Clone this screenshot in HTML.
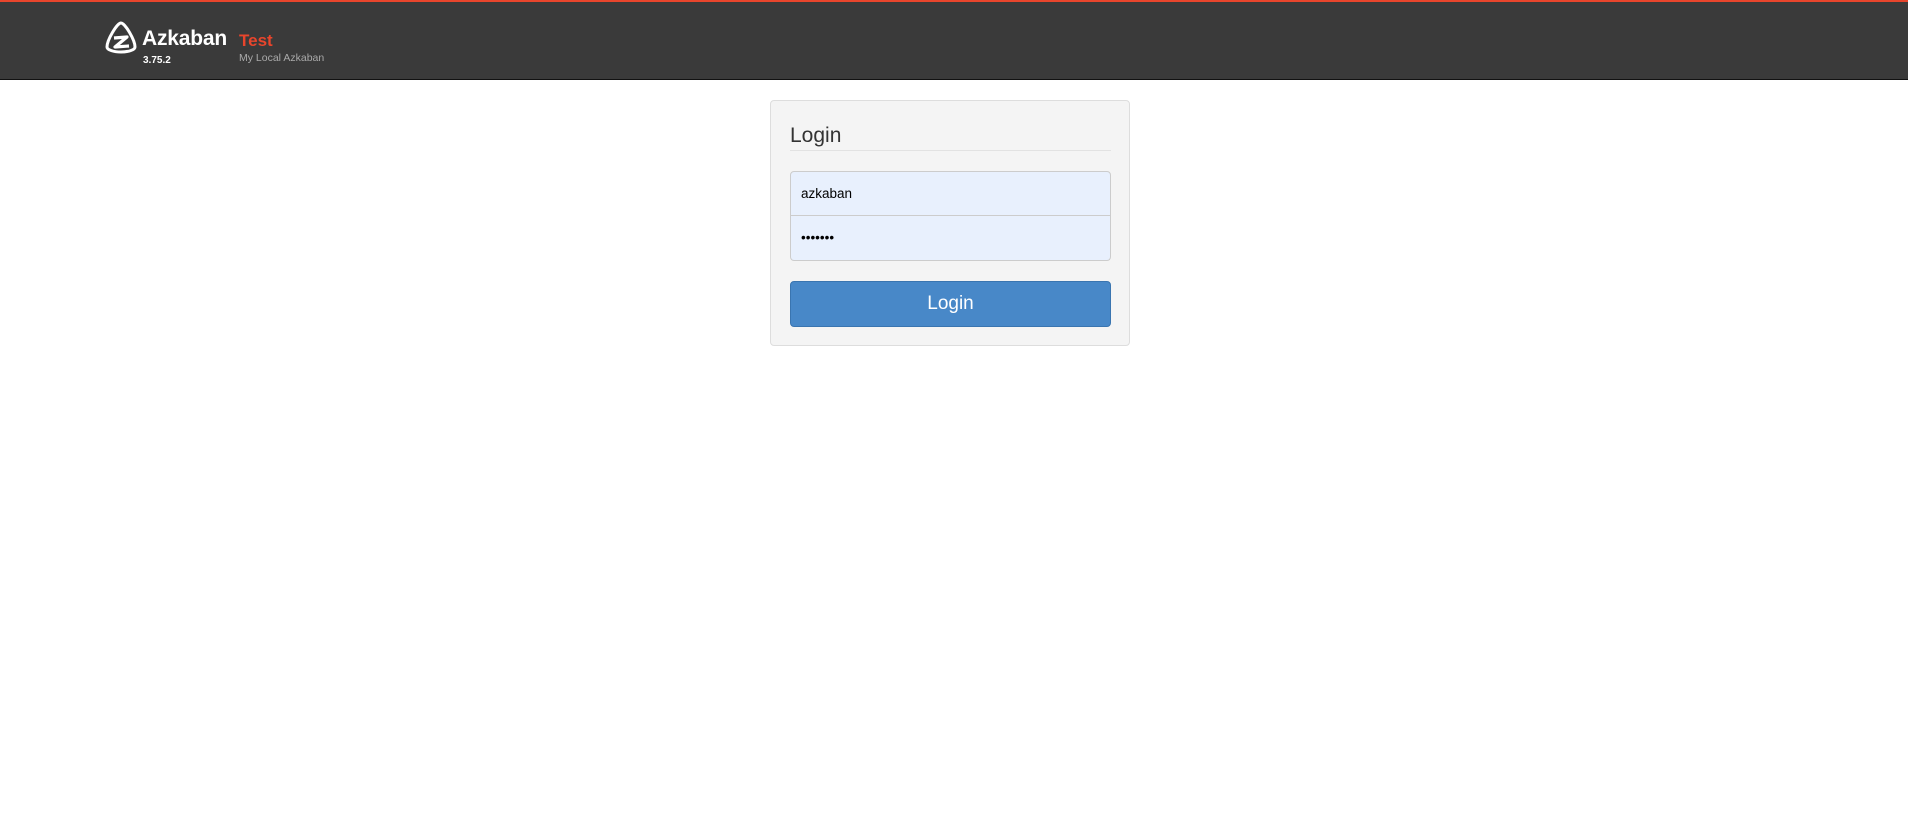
<!DOCTYPE html>
<html><head><meta charset="utf-8"><style>
*{box-sizing:border-box;margin:0;padding:0}
body{width:1908px;height:832px;background:#fff;font-family:"Liberation Sans",Arial,sans-serif;position:relative;overflow:hidden}
.hdr{position:absolute;left:0;top:0;width:1908px;height:80px;background:#3a3a3a;border-top:2px solid #e8452c;border-bottom:1px solid #111}
.logo{position:absolute;left:104px;top:18px}
.az{position:absolute;left:142px;top:25px;color:#fff;font-weight:bold;font-size:21px;letter-spacing:-0.2px}
.test{position:absolute;left:239px;top:29px;color:#e8452c;font-weight:bold;font-size:17px}
.ver{position:absolute;left:143px;top:53px;color:#fff;font-weight:bold;font-size:10px}
.sub{position:absolute;left:239px;top:50px;color:#aaa;font-size:10.5px}
.panel{position:absolute;left:770px;top:100px;width:360px;height:246px;background:#f4f4f4;border:1px solid #ddd;border-radius:4px}
.title{position:absolute;left:19px;top:23px;font-size:21px;color:#333}
.hr{position:absolute;left:19px;top:49px;width:321px;height:1px;background:#e2e2e2}
.inp{position:absolute;left:19px;width:321px;height:45px;background:#e8f0fd;border:1px solid #ccc;font-size:13.5px;color:#000;padding-left:10px;line-height:43px}
.i1{top:70px;border-radius:4px 4px 0 0}
.i2{top:115px;border-radius:0 0 4px 4px;border-top:none}
.btn{position:absolute;left:19px;top:180px;width:321px;height:46px;background:#4888c8;border:1px solid #3a75b0;border-radius:4px;color:#fff;font-size:19px;text-align:center;line-height:44px}
</style></head><body>
<div class="hdr">
<svg class="logo" width="34" height="34" viewBox="0 0 34 34"><path d="M17 3 C13 3 3 20 3 27 C3 30 10 32 17 32 C24 32 31 30 31 27 C31 20 21 3 17 3 Z" fill="none" stroke="#fff" stroke-width="3"/><path d="M10 18 L23 17 L11 27 L25 26" fill="none" stroke="#fff" stroke-width="3.2" stroke-linejoin="round"/></svg>
<div class="az">Azkaban</div>
<div class="test">Test</div>
<div class="ver">3.75.2</div>
<div class="sub">My Local Azkaban</div>
</div>
<div class="panel">
<div class="title">Login</div>
<div class="hr"></div>
<div class="inp i1">azkaban</div>
<div class="inp i2">•••••••</div>
<div class="btn">Login</div>
</div>
</body></html>
